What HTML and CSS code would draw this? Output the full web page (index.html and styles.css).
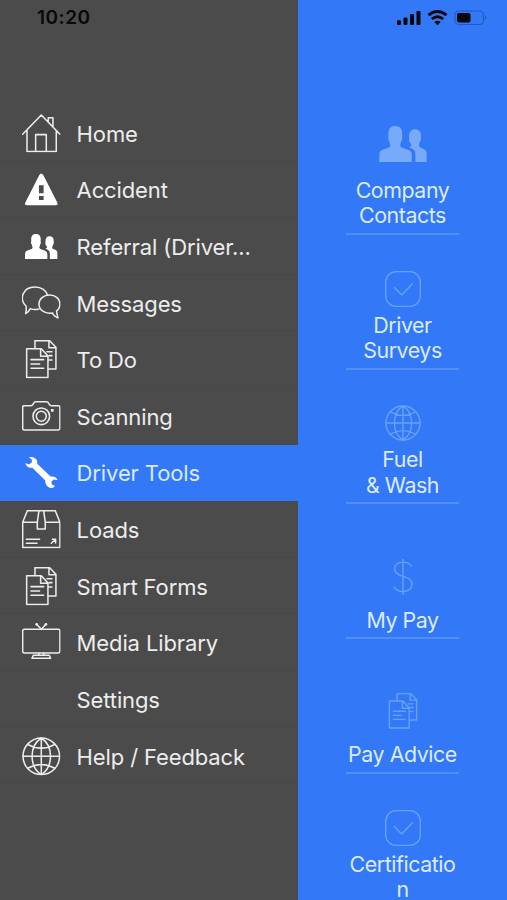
FILE: index.html
```
<!DOCTYPE html>
<html lang="en">
<head>
<meta charset="utf-8">
<title>Driver Tools</title>
<link rel="stylesheet" href="styles.css">
</head>
<body>
<svg class="defs" aria-hidden="true">
  <symbol id="home" viewBox="0 -1 116 116"><path d="M2 60 58 2l56 58M15 49v63h88V49M41 111V61h32v50M79 21V10h14v27"/></symbol>
  <symbol id="alert" viewBox="0 -1 116 116"><path class="solid" fill-rule="evenodd" d="M52 11q6-9 12 0l42 83q4 8-5 8H15q-9 0-5-8zM51 42v24h14V42zm0 32v12h14V74z"/></symbol>
  <symbol id="people" viewBox="0 0 143 109"><path class="solid" d="M0 109V86q0-10 10-14l19-7q6-3 3-11l-3-9q-4-4-2-11 1 0 0-8C27 8 34 0 48 0s22 8 21 26q-1 8 0 8 2 7-2 11l-3 9q-3 8 3 11l21 8q10 4 10 14v22z"/><path class="solid" d="M109 109V84q0-11-11-16l-9-4q9-1 7-9l-5-7q-3-5-1-12-2-26 18-26t18 26q1 7-3 12l-3 7q-2 8 4 10l11 5q8 4 8 12v27z"/></symbol>
  <symbol id="chat" viewBox="0 -1 116 116"><path d="M51 74q-14 4-26-1-5 11-14 15 3-13 1-23C-9 45 1 8 39 8c20 0 34 11 38 24"/><path d="M83 32c18 0 31 12 31 27 0 10-5 17-10 21 0 9 3 13 4 21-9-4-15-9-16-15-24 4-41-9-41-27 0-15 14-27 32-27z"/></symbol>
  <symbol id="docs" viewBox="0 -1 116 116"><path d="M14 25h44l20 22v65H14zM56 26v22h21M27 58h38M27 71h26M27 84h38M39 22V1h44l19 20v65H82M81 2v20h20M75 34h15M82 46h8M82 59h8"/></symbol>
  <symbol id="camera" viewBox="0 -1 116 116"><path d="M6 25h21q4 0 8-7l2-3q2-2 5-2h31q3 0 5 2l2 3q4 7 8 7h21q5 0 5 5v63q0 5-5 5H7q-5 0-5-5V30q0-5 4-5z"/><circle cx="58" cy="57" r="25"/><circle cx="58" cy="57" r="15"/><path class="solid" d="M87 35h8v8h-8z"/></symbol>
  <symbol id="wrench" viewBox="0 -1 116 116"><path class="solid" d="M20 9q14-4 23 6 4 5 3 13l40 39q15-2 21 10l-12-1-7 7 2 8 9 4q-4 7-13 6-17-3-16-22L31 40q-16 3-21-13l12 3 8-6-1-9z"/></symbol>
  <symbol id="box" viewBox="0 -1 116 116"><path d="M2 36 16 1h84l14 35v76H2zM2 36h44m24 0h44M51 1l-5 35v20h24V36L65 1M13 87h40M13 99h32"/><path d="m88 99 12-11M91 87h10v11"/></symbol>
  <symbol id="tv" viewBox="0 -1 116 116"><rect x="2" y="18" width="112" height="71" rx="5"/><path d="M44 3l14 15L72 3M51 89v6m14-6v6M34 96h48l4 9H30z"/><circle class="solid" cx="44" cy="3" r="4"/><circle class="solid" cx="72" cy="3" r="4"/></symbol>
  <symbol id="globe" viewBox="0 -1 116 116"><circle cx="58" cy="57" r="55"/><path d="M58 2v110M3 57h110M58 2C21 26 21 88 58 112M58 2c37 24 37 86 0 110M17 21q41 23 82 0M17 93q41-23 82 0"/></symbol>
  <symbol id="check" viewBox="0 0 116 116"><rect x="2" y="2" width="112" height="112" rx="34"/><path d="m30 53 24 24 34-36"/></symbol>
  <symbol id="dollar" viewBox="0 0 116 116"><path d="M58 1v114M85 23C79 13 70 10 58 10c-15 0-27 8-27 22 0 30 56 18 56 49 0 15-13 24-29 24-13 0-23-4-29-14"/></symbol>
</svg>
<div class="app">
  <header class="status">
    <span class="time">10:20</span>
    <svg class="signals" viewBox="0 0 92 16">
      <path d="M1 11.2q0-1 1-1h2q1 0 1 1V14q0 1-1 1H2q-1 0-1-1zM7.500 8.500q0-1 1-1h2q1 0 1 1V14q0 1-1 1h-2q-1 0-1-1zM14 5q0-1 1-1h2q1 0 1 1v9q0 1-1 1h-2q-1 0-1-1zM20.500 2q0-1 1-1h2q1 0 1 1v12q0 1-1 1h-2q-1 0-1-1z"/>
      <path class="wave" d="M32.500 5.200q9-7.400 18 0M35.800 9q5.700-4.600 11.400 0"/><path d="m38.300 12 3.200 3.300 3.200-3.300q-3.200-2.600-6.400 0z"/>
      <rect class="battery" x="59" y="1" width="28.500" height="13.500" rx="4"/><rect x="61" y="3" width="13.500" height="9.500" rx="2"/><path class="tip" d="M89 5.500q3 2.200 0 4.500z"/>
    </svg>
  </header>
  <nav class="menu">
    <a class="row"><svg class="icon"><use href="#home"/></svg><span>Home</span></a>
    <a class="row"><svg class="icon filled"><use href="#alert"/></svg><span>Accident</span></a>
    <a class="row"><svg class="icon filled group"><use href="#people"/></svg><span>Referral (Driver...</span></a>
    <a class="row"><svg class="icon"><use href="#chat"/></svg><span>Messages</span></a>
    <a class="row"><svg class="icon"><use href="#docs"/></svg><span>To Do</span></a>
    <a class="row"><svg class="icon"><use href="#camera"/></svg><span>Scanning</span></a>
    <a class="row active"><svg class="icon filled"><use href="#wrench"/></svg><span>Driver Tools</span></a>
    <a class="row"><svg class="icon"><use href="#box"/></svg><span>Loads</span></a>
    <a class="row"><svg class="icon"><use href="#docs"/></svg><span>Smart Forms</span></a>
    <a class="row"><svg class="icon"><use href="#tv"/></svg><span>Media Library</span></a>
    <a class="row"><svg class="icon"></svg><span>Settings</span></a>
    <a class="row"><svg class="icon"><use href="#globe"/></svg><span>Help / Feedback</span></a>
  </nav>
  <main class="tools">
    <a class="tile contacts"><svg class="icon"><use href="#people"/></svg><span>Company<br>Contacts</span></a>
    <a class="tile"><svg class="icon"><use href="#check"/></svg><span>Driver<br>Surveys</span></a>
    <a class="tile"><svg class="icon"><use href="#globe"/></svg><span>Fuel<br>&amp; Wash</span></a>
    <a class="tile single"><svg class="icon"><use href="#dollar"/></svg><span>My Pay</span></a>
    <a class="tile single"><svg class="icon"><use href="#docs"/></svg><span>Pay Advice</span></a>
    <a class="tile"><svg class="icon"><use href="#check"/></svg><span>Certificatio<br>n</span></a>
  </main>
</div>
</body>
</html>
```
FILE: styles.css
```
* { box-sizing: border-box; }
body {
  margin: 0;
  font-family: Inter, "Liberation Sans", sans-serif;
  font-size: 22px;
}
.defs { display: block; width: 0; height: 0; }
.app {
  display: grid;
  grid-template-columns: 298px 1fr;
  grid-template-rows: 35px 865px;
  height: 900px;
  overflow: hidden;
  background: linear-gradient(90deg, #4b4b4b 298px, #3378f6 298px);
}
.status {
  grid-column: 1 / -1;
  display: flex;
  justify-content: space-between;
  align-items: center;
  padding: 0 19px 0 37px;
  color: #080808;
}
.time { font-size: 19px; font-weight: 600; line-height: 35px; letter-spacing: 0.5px; }
.signals { width: 92px; height: 16px; fill: #05070c; }
.wave { fill: none; stroke: #05070c; stroke-width: 2.8; }
.battery { fill: none; stroke: #235bc4; stroke-width: 1.2; }
.tip { fill: #235bc4; }
.menu { padding-top: 70px; letter-spacing: -0.12px; }
.row {
  display: flex;
  align-items: center;
  gap: 16px;
  height: 56.62px;
  padding: 1px 0 0 22px;
  border-bottom: 1px solid #484848;
  color: #ededed;
  white-space: nowrap;
}
.row span { padding-top: 1px; }
.row.active { background: #3378f6; color: #dceaff; border-color: #3378f6; }
.icon {
  flex: none;
  width: 38.6px;
  height: 38.6px;
  overflow: visible;
  fill: none;
  stroke: currentColor;
  stroke-width: 4.6;
  stroke-linejoin: round;
  stroke-linecap: round;
}
.icon.filled { color: #fff; }
.icon.group { width: 32.6px; height: 25px; margin: 0 3px; }
.icon use { overflow: visible; }
.solid { fill: currentColor; stroke: none; }
.tools {
  display: flex;
  flex-direction: column;
  align-items: center;
  padding-top: 65px;
}
.tile {
  flex: none;
  display: flex;
  flex-direction: column;
  align-items: center;
  justify-content: flex-end;
  width: 113px;
  height: 134.8px;
  padding-bottom: 4px;
  border-bottom: 2px solid #5290f8;
  color: #dceaff;
  font-size: 21.4px;
  letter-spacing: -0.45px;
  line-height: 25.5px;
  text-align: center;
  white-space: nowrap;
}
.tile .icon { width: 36px; height: 36px; margin-bottom: 6px; color: #67a0fa; }
.tile.single .icon { margin-bottom: 13px; }
.tile.contacts .icon { width: 48px; margin-bottom: 16px; color: #77abfa; }
```
